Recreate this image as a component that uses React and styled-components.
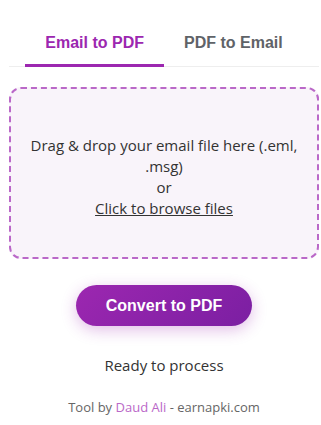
import React, { useState } from "react";
import styled, { createGlobalStyle } from "styled-components";

const GlobalStyle = createGlobalStyle`
  html, body {
    margin: 0;
    padding: 0;
    background: #ffffff;
  }
  body {
    font-family: "Open Sans", "Noto Sans", sans-serif;
    color: #333333;
  }
`;

function App() {
  const [tab, setTab] = useState("email");

  return (
    <Page>
      <GlobalStyle />
      <Tabs>
        <Tab active={tab === "email"} onClick={() => setTab("email")}>
          Email to PDF
        </Tab>
        <Tab active={tab === "pdf"} onClick={() => setTab("pdf")}>
          PDF to Email
        </Tab>
      </Tabs>

      <DropZone>
        <DropText>
          Drag &amp; drop your email file here (.eml, .msg)
          <br />
          or
          <br />
          <BrowseLink>Click to browse files</BrowseLink>
        </DropText>
      </DropZone>

      <ConvertButton>Convert to PDF</ConvertButton>

      <Status>Ready to process</Status>

      <Footer>
        Tool by <FooterLink>Daud Ali</FooterLink> - earnapki.com
      </Footer>
    </Page>
  );
}

export default App;

const Page = styled.div`
  padding: 22px 2px 0 9px;
  display: flex;
  flex-direction: column;
  align-items: stretch;
`;

const Tabs = styled.div`
  display: flex;
  justify-content: center;
  border-bottom: 1px solid #eeeeee;
`;

const Tab = styled.button`
  background: none;
  border: none;
  border-bottom: 3px solid ${(p) => (p.active ? "#9c27b0" : "transparent")};
  margin-bottom: -1px;
  padding: 12px 20px;
  font-family: "Liberation Sans", Arial, sans-serif;
  font-weight: bold;
  font-size: 16px;
  line-height: 18px;
  color: ${(p) => (p.active ? "#9c27b0" : "#5f6368")};
  cursor: pointer;
`;

const DropZone = styled.div`
  margin-top: 20px;
  height: 172px;
  box-sizing: border-box;
  border: 2px dashed #ba68c8;
  border-radius: 12px;
  background: #f9f4fa;
  display: flex;
  align-items: center;
  justify-content: center;
  padding: 8px 16px 0;
  text-align: center;
`;

const DropText = styled.p`
  margin: 0;
  font-size: 15px;
  line-height: 21px;
  color: #333333;
`;

const BrowseLink = styled.span`
  text-decoration: underline;
  cursor: pointer;
`;

const ConvertButton = styled.button`
  align-self: center;
  margin-top: 26px;
  padding: 12px 30px;
  border: none;
  border-radius: 30px;
  background: linear-gradient(135deg, #9c27b0, #7b1fa2);
  box-shadow: 0 4px 15px rgba(156, 39, 176, 0.3);
  color: #ffffff;
  font-family: "Liberation Sans", Arial, sans-serif;
  font-weight: bold;
  font-size: 16px;
  line-height: 17px;
  cursor: pointer;
`;

const Status = styled.div`
  margin-top: 29px;
  text-align: center;
  font-size: 15px;
  line-height: 20px;
  color: #333333;
`;

const Footer = styled.div`
  margin-top: 23px;
  text-align: center;
  font-size: 13px;
  line-height: 18px;
  color: #666666;
`;

const FooterLink = styled.span`
  color: #ba68c8;
`;
